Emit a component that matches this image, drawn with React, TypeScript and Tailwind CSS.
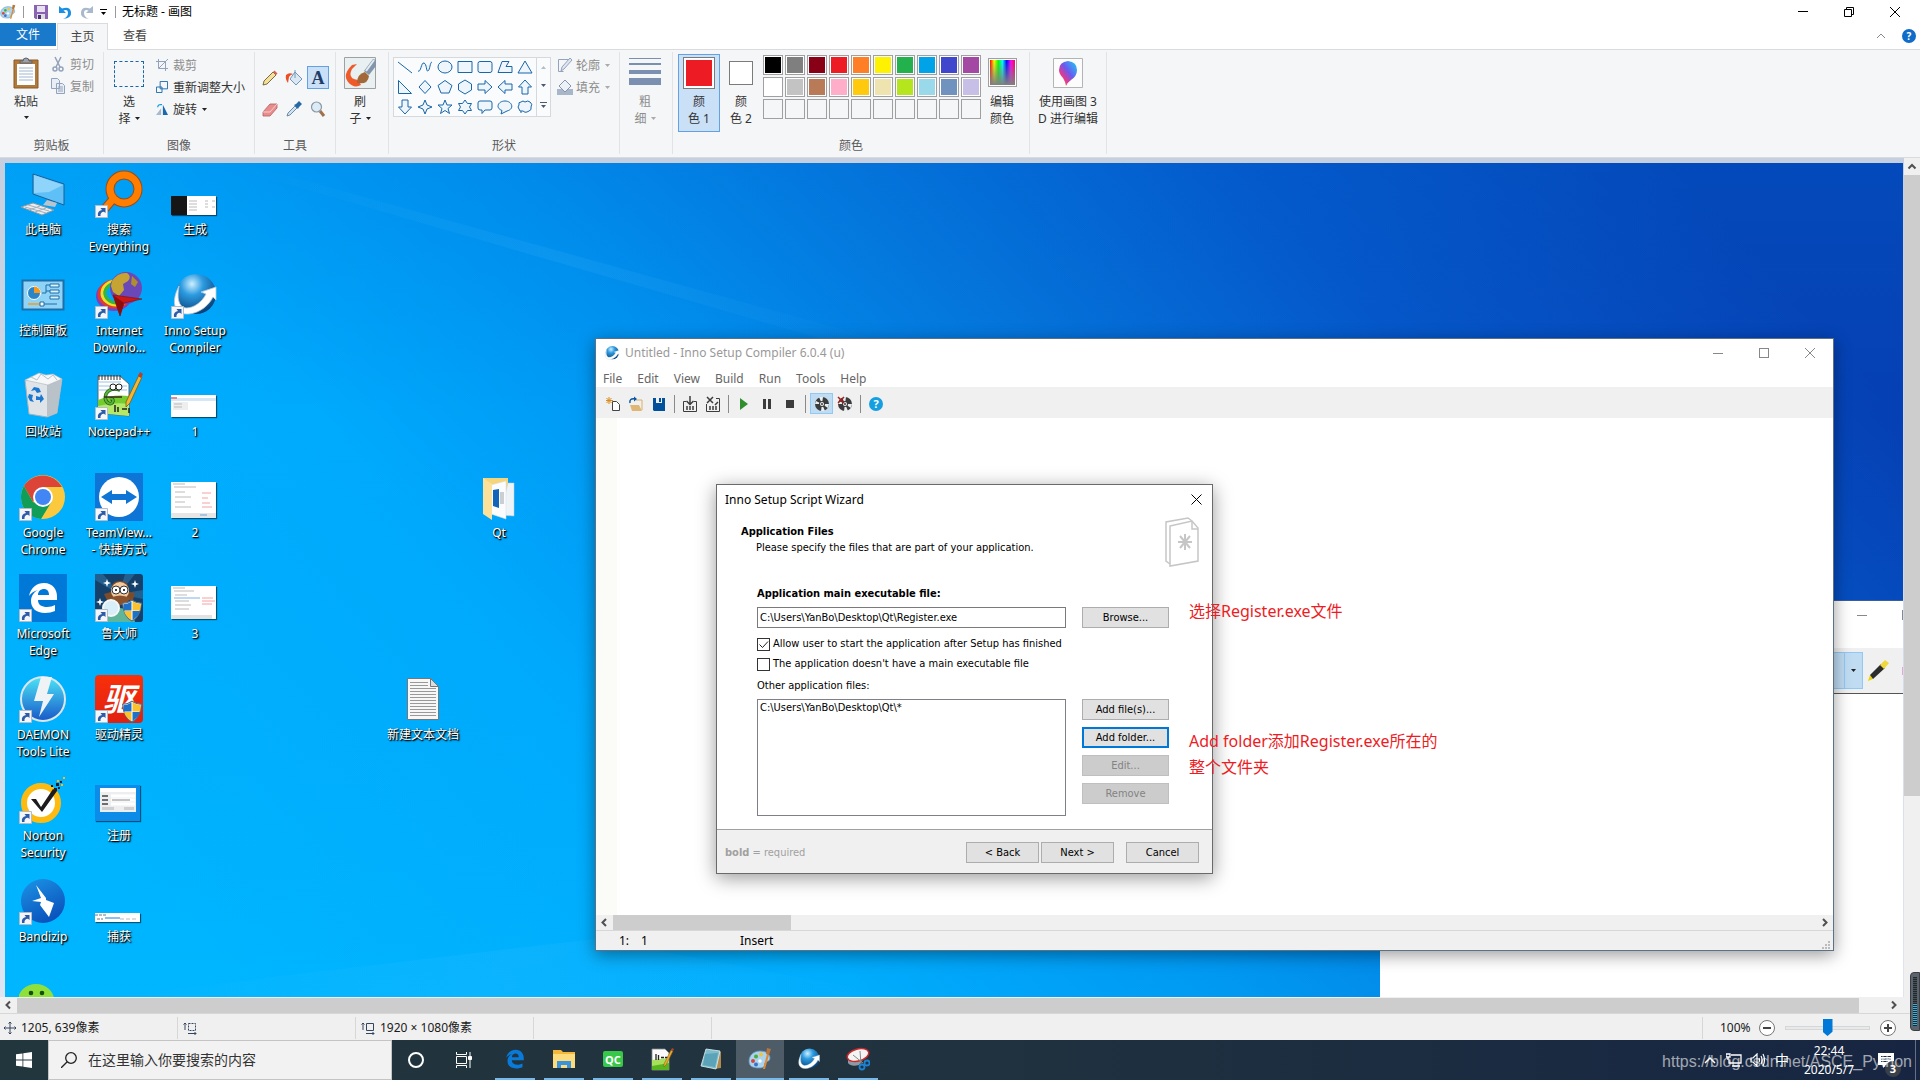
import type { ReactNode } from 'react'
import clsx from 'clsx'

const uiFont = 'font-["Noto_Sans","Noto_Sans_CJK_SC",sans-serif]'
const dialogFont = 'font-["DejaVu_Sans_Condensed","Noto_Sans_CJK_SC",sans-serif]'

const palette = [
  'bg-black', 'bg-[#7f7f7f]', 'bg-[#880015]', 'bg-[#ed1c24]', 'bg-[#ff7f27]',
  'bg-[#fff200]', 'bg-[#22b14c]', 'bg-[#00a2e8]', 'bg-[#3f48cc]', 'bg-[#a349a4]',
  'bg-white', 'bg-[#c3c3c3]', 'bg-[#b97a57]', 'bg-[#ffaec9]', 'bg-[#ffc90e]',
  'bg-[#efe4b0]', 'bg-[#b5e61d]', 'bg-[#99d9ea]', 'bg-[#7092be]', 'bg-[#c8bfe7]',
]

const shapes = [
  'M1 3L15 14',
  'M1 12C4 14 4 3 7 4S9 13 11 12 13 3 15 3',
  'M1 8a7 6 0 1 0 14 0a7 6 0 1 0-14 0',
  'M1 2.5h14v11H1z',
  'M3 2.5h10q2 0 2 2v7q0 2-2 2H3q-2 0-2-2v-7q0-2 2-2z',
  'M5 2.5h7l-3 5h6v6H1z',
  'M8 2l7 12H1z',
  'M1.5 1.5v13h13z',
  'M8 1.500l6 6.500-6 6.500-6-6.500z',
  'M8 1.500l7 5-3 7.500H4L1 6.500z',
  'M8 1l6.500 4v6L8 15l-6.500-4V5z',
  'M1 5h7V1.500L15 8l-7 6.500V11H1z',
  'M15 5H8V1.500L1 8l7 6.500V11h7z',
  'M5 15V8H1.500L8 1l6.500 7H11v7z',
  'M5 1v7H1.500L8 15l6.500-7H11V1z',
  'M8 1l2 5 5 2-5 2-2 5-2-5-5-2 5-2z',
  'M8 1l2 5h5l-4 3.500 1.500 5L8 11.500l-4.500 3 1.500-5L1 6h5z',
  'M8 1l2.500 3.500h4L12.500 8l2 3.500h-4L8 15l-2.500-3.500h-4L3.500 8l-2-3.500h4z',
  'M3 2h10q2 0 2 2v5q0 2-2 2H8l-3 3.500V11H3q-2 0-2-2V4q0-2 2-2z',
  'M5 11.500C-2 9 1 2 8 2s10 8 2 10L4 15z',
  'M4 3q2-2 4 0 3-2 5 0 3 2 1 5 1 3-2 4l-2 1q-2 1-4-1-4 1-4-2-2-2 0-4Q1 3 4 3zM4 12v2',
]

function Caret({ className = 'text-[#222]' }: { className?: string }) {
  return (
    <svg viewBox="0 0 7 4" className={clsx('inline-block w-[5px] h-[3px] shrink-0', className)} fill="currentColor" aria-hidden>
      <path d="M0 0h7L3.500 4z" />
    </svg>
  )
}

function PaintIcon({ className }: { className: string }) {
  return (
    <svg viewBox="0 0 24 24" className={className} aria-hidden>
      <path d="M1 14C1 8 6 4 12 4s10 3 10 7-4 3-5 5 1 5-6 5S1 19 1 14z" fill="#a9d3ee" stroke="#5f93bb" strokeWidth=".8" />
      <circle cx="5" cy="14" r="2" fill="#d9453a" />
      <circle cx="8" cy="9.500" r="2" fill="#46ad3e" />
      <circle cx="13" cy="7.500" r="2" fill="#f3c43a" />
      <circle cx="8" cy="17.500" r="2" fill="#3a72c9" />
      <circle cx="12" cy="14" r="1.800" fill="#fff" />
      <path d="M15 22l4-15 2 1-4 14z" fill="#e08a34" />
      <path d="M18 7l1-6 4 1-2 6z" fill="#b9753b" />
    </svg>
  )
}

function InnoIcon({ className }: { className: string }) {
  return (
    <svg viewBox="0 0 48 48" className={className} aria-hidden>
      <defs>
        <radialGradient id="innoBall" cx=".4" cy=".25" r=".8">
          <stop offset="0" stopColor="#cdefff" />
          <stop offset=".35" stopColor="#2c9be0" />
          <stop offset="1" stopColor="#04376f" />
        </radialGradient>
      </defs>
      <circle cx="25" cy="23" r="20" fill="url(#innoBall)" />
      <path d="M8 15C0 30 2 44 18 43 29 42 38 34 42 26l3 3V16l-15 5 5 2C31 31 23 37 15 37 7 36 6 26 8 15z" fill="#fff" stroke="#b8c8d8" strokeWidth=".8" />
    </svg>
  )
}

function EdgeIcon({ className }: { className: string }) {
  return (
    <svg viewBox="0 0 32 32" className={className} fill="currentColor" aria-hidden>
      <path d="M2 14C4 5 10 1 17 1c9 0 13 7 13 13v4H11c0 5 4 7 9 7 3 0 6-1 8-2v6c-3 1-6 2-10 2C9 31 4 26 4 19c0-5 3-9 7-11-4 1-7 3-9 6zm9-1h11c0-4-2-6-5-6s-6 2-6 6z" />
    </svg>
  )
}

function NotepadPlusIcon({ className }: { className: string }) {
  return (
    <svg viewBox="0 0 48 48" className={className} aria-hidden>
      <path d="M3 4h22l9 8v32L3 41z" fill="#fff" stroke="#5a6672" />
      <path d="M4 10h22M4 14h28M4 18h28" stroke="#9cc3e6" />
      <path d="M3 28q14-6 31-4v19L3 41z" fill="#74cc2f" />
      <path d="M3 34q16-4 31-2v12L3 41z" fill="#b4e869" />
      <path d="M4 3v5M7 3v5M10 3v5M13 3v5M16 3v5M19 3v5M22 3v5M25 3v5" stroke="#333" />
      <path d="M25 18q-10-3-14 4-2 6 2 9 4 2 5-2 0-3-3-2" fill="none" stroke="#1f5f1a" strokeWidth="3.500" />
      <path d="M25 18q-10-3-14 4-2 6 2 9 4 2 5-2 0-3-3-2" fill="none" stroke="#5cb338" strokeWidth="2" />
      <path d="M9 25h18" stroke="#3a2a1a" strokeWidth="1.500" />
      <circle cx="18" cy="15" r="3" fill="#fff" stroke="#222" />
      <circle cx="24" cy="15" r="3" fill="#fff" stroke="#222" />
      <path d="M20 33v7M23 35v5M27 37h5M34 36v5" stroke="#222" strokeWidth="1.500" />
      <path d="M31 30L44 3l3 2-12 26-4 4z" fill="#f2b632" stroke="#7a5a14" strokeWidth=".8" />
      <path d="M43 4l2-4 3 2-2 4z" fill="#b5402b" />
    </svg>
  )
}

function Shield() {
  return (
    <svg viewBox="0 0 20 22" className="absolute right-0 bottom-0 w-[22px] h-[23px]" aria-hidden>
      <path d="M10 1q4 3 9 3-1 13-9 17Q2 17 1 4q5 0 9-3z" fill="#fff" stroke="#5b6b7c" />
      <path d="M9.500 2.500V11H2.200Q1.800 8 1.800 5 6 5 9.500 2.500zM10.500 11.500h7.200Q16 17 10.500 20z" fill="#1d71c8" />
      <path d="M10.500 2.500V11h7.300q.5-3 .4-6-4-.2-7.700-2.500zM9.500 11.500H2.400Q4 17 9.500 20z" fill="#fcc22d" />
    </svg>
  )
}

function ShortcutArrow() {
  return (
    <svg viewBox="0 0 13 13" className="absolute left-0 bottom-0 w-[13px] h-[13px]" aria-hidden>
      <path d="M.5.5h12v12H.5z" fill="#f4f6f9" stroke="#b4bcc8" />
      <path d="M3 11Q2 6 7 5L5.500 3H10.500v5L9 6.800Q5 7 5.500 11z" fill="#2c5ba8" />
    </svg>
  )
}

function Thumb({ className, children }: { className: string; children?: ReactNode }) {
  return <span className={clsx('block w-[45px] bg-white shadow-[1px_1px_1px_#0008] overflow-hidden', className)}>{children}</span>
}

type Shortcut = {
  id: string
  label?: string
  col: string
  row: string
  icon: ReactNode
  arrow?: boolean
}

const desktopIcons: Shortcut[] = [
  {
    id: 'pc', label: '此电脑', col: 'col-start-1', row: 'row-start-1',
    icon: (
      <svg viewBox="0 0 48 48" className="w-12 h-12">
        <path d="M14 4l31 10v21L14 24z" fill="#5fc0f7" stroke="#1d5f94" />
        <path d="M15 5l29 10L30 22l-15 1z" fill="#8fd5fb" />
        <path d="M28 30l10 3-2 4-12-2z" fill="#b9c4cc" />
        <path d="M2 37l12-4 21 7-12 5z" fill="#e9edf0" stroke="#8b98a3" />
        <path d="M6 37l21 6M9 35l21 6M10 40l11-4M16 42l11-4" stroke="#a5b0b9" />
      </svg>
    ),
  },
  {
    id: 'control', label: '控制面板', col: 'col-start-1', row: 'row-start-2',
    icon: (
      <svg viewBox="0 0 48 48" className="w-12 h-12">
        <path d="M3.500 9.500h41v29h-41z" fill="#8fd3f7" stroke="#1c6fa8" strokeWidth="2" />
        <circle cx="15" cy="22" r="6.500" fill="#2a84c8" stroke="#fff" />
        <path d="M15 22v-6.500a6.500 6.500 0 0 1 6.500 6.500z" fill="#f79a1c" />
        <path d="M23 22h4v-8h4M27 20h4" stroke="#1c6fa8" fill="none" />
        <path d="M31 13h9v3h-9zM31 19h9v3h-9zM31 25h9v3h-9z" fill="#dff3fe" stroke="#1c6fa8" />
        <path d="M9 33h14" stroke="#f79a1c" strokeWidth="1.500" />
        <path d="M23 33h15" stroke="#1c6fa8" />
        <path d="M21 31h4v4h-4z" fill="#fff" stroke="#1c6fa8" />
      </svg>
    ),
  },
  {
    id: 'bin', label: '回收站', col: 'col-start-1', row: 'row-start-3',
    icon: (
      <svg viewBox="0 0 48 48" className="w-12 h-12">
        <path d="M6 8l37-1-5 34-10 4-18-3z" fill="#dfe4e8" stroke="#a8b1b9" />
        <path d="M28 13l15-6-5 34-10 4z" fill="#b9c2c9" />
        <path d="M6 8l8-4 6-3 7 2 7-1 9 5-14 6z" fill="#f5f7f8" stroke="#a9b3ba" strokeWidth=".6" />
        <path d="M12 5l6 3 4-6 7 5 5-4 4 5" fill="none" stroke="#b7c0c7" />
        <path d="M12 19l3-4 5 1 2 4-4 1-2-3zM22 22l3 5-4 4v-3h-4v-4l4 1zM10 22l4 1-1 4 2 3-4-1-2-4z" fill="#1c78cf" />
      </svg>
    ),
  },
  {
    id: 'chrome', label: 'Google Chrome', col: 'col-start-1', row: 'row-start-4', arrow: true,
    icon: (
      <svg viewBox="0 0 48 48" className="w-12 h-12">
        <circle cx="24" cy="24" r="22" fill="#fbc93d" />
        <path d="M5 13A22 22 0 0 1 43 14H24L14 29z" fill="#db4437" />
        <path d="M5 13A22 22 0 0 0 22 46L33 28 24 33 14 29z" fill="#0f9d58" />
        <circle cx="24" cy="24" r="10" fill="#fff" />
        <circle cx="24" cy="24" r="8" fill="#4285f4" />
      </svg>
    ),
  },
  {
    id: 'edge', label: 'Microsoft Edge', col: 'col-start-1', row: 'row-start-5', arrow: true,
    icon: (
      <span className="flex w-12 h-12 items-center justify-center bg-[#0078d7] text-white">
        <EdgeIcon className="w-8 h-8" />
      </span>
    ),
  },
  {
    id: 'daemon-tools', label: 'DAEMON Tools Lite', col: 'col-start-1', row: 'row-start-6', arrow: true,
    icon: (
      <svg viewBox="0 0 48 48" className="w-12 h-12">
        <defs>
          <linearGradient id="daemon" x2="0" y2="1">
            <stop offset="0" stopColor="#4ce4f7" />
            <stop offset="1" stopColor="#1858c8" />
          </linearGradient>
        </defs>
        <circle cx="24" cy="24" r="22" fill="url(#daemon)" stroke="#dce6ee" strokeWidth="2" />
        <path d="M22 2h11l-5 17h7L20 42l4-16h-9z" fill="#f0f3f5" />
      </svg>
    ),
  },
  {
    id: 'norton', label: 'Norton Security', col: 'col-start-1', row: 'row-start-7', arrow: true,
    icon: (
      <svg viewBox="0 0 48 48" className="w-12 h-12">
        <circle cx="22" cy="27" r="17" fill="#fff" stroke="#fdbb12" strokeWidth="6" />
        <path d="M12 23l5 0 5 8L34 13l4 2-15 21z" fill="#1c1c1c" />
        <path d="M35 12h3v3h-3zM37 7h3v3h-3zM41 5h2v2h-2zM39 11h2v2h-2zM32 9h2v2h-2z" fill="#1c1c1c" />
        <path d="M44 1h2v2h-2zM42 8h2v2h-2zM38 4h2v2h-2z" fill="#fdbb12" />
      </svg>
    ),
  },
  {
    id: 'bandizip-app', label: 'Bandizip', col: 'col-start-1', row: 'row-start-8', arrow: true,
    icon: (
      <svg viewBox="0 0 48 48" className="w-12 h-12">
        <defs>
          <linearGradient id="bandizip" x2=".5" y2="1">
            <stop offset="0" stopColor="#1c95e6" />
            <stop offset="1" stopColor="#0b54bd" />
          </linearGradient>
        </defs>
        <circle cx="24" cy="24" r="22" fill="url(#bandizip)" />
        <path d="M17 8l10 13 0 2 8 3-5 14L21 28l1-3-9-1 9-3z" fill="#fff" />
      </svg>
    ),
  },
  {
    id: 'wechat', col: 'col-start-1', row: 'row-start-9',
    icon: (
      <svg viewBox="0 0 48 48" className="w-12 h-12">
        <ellipse cx="17" cy="22" rx="18" ry="16" fill="#90e03c" />
        <ellipse cx="33" cy="32" rx="14" ry="13" fill="#f1f4f4" />
        <circle cx="12" cy="15" r="2.300" fill="#174d0c" />
        <circle cx="23" cy="15" r="2.300" fill="#174d0c" />
      </svg>
    ),
  },
  {
    id: 'everything', label: '搜索 Everything', col: 'col-start-2', row: 'row-start-1', arrow: true,
    icon: (
      <svg viewBox="0 0 48 48" className="w-12 h-12">
        <circle cx="29" cy="19" r="14" fill="none" stroke="#a04a10" strokeWidth="9" />
        <path d="M19 28L7 42" stroke="#a04a10" strokeWidth="9" />
        <circle cx="29" cy="19" r="14" fill="none" stroke="#ff7e00" strokeWidth="7" />
        <path d="M19 28L7 42" stroke="#ff7e00" strokeWidth="7" />
      </svg>
    ),
  },
  {
    id: 'idm', label: 'Internet Downlo...', col: 'col-start-2', row: 'row-start-2', arrow: true,
    icon: (
      <svg viewBox="0 0 48 48" className="w-12 h-12">
        <ellipse cx="19" cy="25" rx="16" ry="13" fill="none" stroke="#7d3fc0" strokeWidth="4" />
        <ellipse cx="20" cy="23" rx="16" ry="13" fill="none" stroke="#e23a2c" strokeWidth="3" />
        <ellipse cx="21" cy="22" rx="14" ry="12" fill="none" stroke="#f4dc22" strokeWidth="3" />
        <ellipse cx="22" cy="22" rx="12" ry="10" fill="none" stroke="#37b53a" strokeWidth="3" />
        <circle cx="31" cy="17" r="16" fill="#6b48b8" />
        <path d="M17 10Q23 1 32 2q5 3 1 8l-5 3 1 6-5 6-6-4-2-6z" fill="#c5a433" />
        <path d="M37 5l6 6-3 5-4-3z" fill="#b08e2c" />
        <path d="M18 24l29 4-18 4-4 13z" fill="#cc1717" stroke="#7d0b0b" strokeWidth=".6" />
        <path d="M18 24l11 8-4 13z" fill="#8d0d0d" />
      </svg>
    ),
  },
  { id: 'npp', label: 'Notepad++', col: 'col-start-2', row: 'row-start-3', arrow: true, icon: <NotepadPlusIcon className="w-12 h-12" /> },
  {
    id: 'teamviewer', label: 'TeamView...\n- 快捷方式', col: 'col-start-2', row: 'row-start-4', arrow: true,
    icon: (
      <svg viewBox="0 0 48 48" className="w-12 h-12">
        <path d="M0 0h48v48H0z" fill="#0e74d6" />
        <circle cx="24" cy="24" r="20" fill="#fff" />
        <path d="M6 24l11-7v4h14v-4l11 7-11 7v-4H17v4z" fill="#0e74d6" />
      </svg>
    ),
  },
  {
    id: 'ludashi', label: '鲁大师', col: 'col-start-2', row: 'row-start-5', arrow: true,
    icon: (
      <span className="relative block w-12 h-12">
        <svg viewBox="0 0 48 48" className="w-12 h-12">
          <rect width="48" height="48" rx="3" fill="#15406a" />
          <path d="M24 20L0 6V0h8zM24 20L30 0h10zM24 20l24-4v9z" fill="#24608f" />
          <path d="M10 48q2-14 14-14t16 14z" fill="#5fb59a" />
          <path d="M9 20l7-2q0-12 9-11 9-1 9 11l6 1-2 7H12z" fill="#7c4b2a" />
          <ellipse cx="25" cy="17" rx="9" ry="9" fill="#f3c9a0" />
          <path d="M15 24q10-5 20 0l-4 7H19z" fill="#8a522c" />
          <circle cx="21" cy="16" r="4" fill="#fff" stroke="#333" />
          <circle cx="29" cy="16" r="4" fill="#fff" stroke="#333" />
          <circle cx="21" cy="16" r="1" />
          <circle cx="29" cy="16" r="1" />
          <circle cx="16" cy="34" r="8" fill="#d8eef8" stroke="#f4f6f7" strokeWidth="2" />
          <path d="M12 5l1 3 3 1-3 1-1 3-1-3-3-1 3-1zM40 6l1 3 3 1-3 1-1 3-1-3-3-1 3-1zM5 24l1 3 3 1-3 1-1 3-1-3-3-1 3-1z" fill="#fff" />
        </svg>
        <Shield />
      </span>
    ),
  },
  {
    id: 'drivers', label: '驱动精灵', col: 'col-start-2', row: 'row-start-6', arrow: true,
    icon: (
      <span className="relative flex w-12 h-12 items-center justify-center rounded-sm bg-gradient-to-b from-[#f8300a] to-[#e02010] text-[32px] leading-none font-bold italic text-white">
        驱
        <Shield />
      </span>
    ),
  },
  {
    id: 'register', label: '注册', col: 'col-start-2', row: 'row-start-7',
    icon: (
      <span className="flex w-[45px] h-9 mb-[3px] mr-[3px] items-start justify-center bg-[#0c8be8] pt-[3px] shadow-[1px_1px_1px_#0008]">
        <svg viewBox="0 0 36 24" className="w-9 h-6">
          <path d="M0 0h36v24H0z" fill="#eceef0" />
          <path d="M0 0h36v4H0zM11 6.500h24v3H11zM11 10.500h24v3H11zM11 14.500h24v3H11z" fill="#fff" />
          <path d="M2 8h6M2 12h6M2 16h6" stroke="#444" strokeWidth="1.500" />
          <path d="M12 12h18" stroke="#888" />
          <path d="M2 19h12v3H2zM24 19h10v3H24z" fill="#cfcfcf" />
        </svg>
      </span>
    ),
  },
  {
    id: 'capture', label: '捕获', col: 'col-start-2', row: 'row-start-8',
    icon: (
      <Thumb className="h-[9px] mb-[3px] mr-[3px]">
        <svg viewBox="0 0 45 9" className="block w-[45px] h-[9px]">
          <path d="M0 2h12M2 6h6" stroke="#777" strokeDasharray="3 1" />
          <path d="M10 5h15" stroke="#8cc0ee" strokeWidth="2" />
          <path d="M25 6h18" stroke="#bbb" strokeDasharray="4 2" />
        </svg>
      </Thumb>
    ),
  },
  {
    id: 'build', label: '生成', col: 'col-start-3', row: 'row-start-1',
    icon: (
      <Thumb className="h-[19px] mb-[3px] mr-[3px]">
        <svg viewBox="0 0 45 19" className="block w-[45px] h-[19px]">
          <path d="M0 0h16v19H0z" fill="#161616" />
          <path d="M18 5h8M18 8h8M18 11h8M18 14h8M34 5h3M34 8h3M34 11h3M41 5h3M41 11h3" stroke="#bbb" />
        </svg>
      </Thumb>
    ),
  },
  { id: 'inno', label: 'Inno Setup Compiler', col: 'col-start-3', row: 'row-start-2', arrow: true, icon: <InnoIcon className="w-12 h-12" /> },
  {
    id: 'shot-1', label: '1', col: 'col-start-3', row: 'row-start-3',
    icon: (
      <Thumb className="h-[22px] mb-[3px] mr-[3px]">
        <svg viewBox="0 0 45 22" className="block w-[45px] h-[22px]">
          <path d="M0 3h45v3H0z" fill="#d5e6f6" />
          <path d="M0 2h6v2H0z" fill="#e88a96" />
          <path d="M2 7h15v8H2z" fill="#eee" />
          <path d="M3 9h8M3 12h8" stroke="#bbb" />
        </svg>
      </Thumb>
    ),
  },
  {
    id: 'shot-2', label: '2', col: 'col-start-3', row: 'row-start-4',
    icon: (
      <Thumb className="h-9 mb-[3px] mr-[3px]">
        <svg viewBox="0 0 45 36" className="block w-[45px] h-9">
          <path d="M2 2h12M3 5h22M4 10h10M4 15h16M4 20h10M4 25h16" stroke="#bbb" />
          <path d="M31 11h9M31 16h6M31 21h8M31 25h10" stroke="#f5a0a0" />
          <path d="M0 31h45v5H0z" fill="#e6e6e6" />
          <path d="M29 33h7" stroke="#6aa5da" />
        </svg>
      </Thumb>
    ),
  },
  {
    id: 'shot-3', label: '3', col: 'col-start-3', row: 'row-start-5',
    icon: (
      <Thumb className="h-[33px] mb-[3px] mr-[3px]">
        <svg viewBox="0 0 45 33" className="block w-[45px] h-[33px]">
          <path d="M2 2h12M3 5h20M4 9h12M4 15h14M4 19h16M4 23h14" stroke="#bbb" />
          <path d="M3 12h26" stroke="#7ab4e4" />
          <path d="M31 12h11M31 15h13M31 18h10" stroke="#f5a0a0" />
          <path d="M0 29h41v4H0z" fill="#e2e2e2" />
        </svg>
      </Thumb>
    ),
  },
  {
    id: 'qt-folder', label: 'Qt', col: 'col-start-7', row: 'row-start-4',
    icon: (
      <svg viewBox="0 0 48 48" className="w-12 h-12">
        <path d="M8 5h25v30l-17 6-8-5z" fill="#f5d57c" />
        <path d="M33 10h6v33l-14-1z" fill="#eef3f7" stroke="#b9cfdf" strokeWidth=".5" />
        <path d="M16 12l15-4v38l-15-5z" fill="#fbfcfd" stroke="#d6dde2" strokeWidth=".5" />
        <path d="M18 17l6-1v19l-6-2z" fill="#1164b8" />
        <path d="M25 19h4v12h-4z" fill="#cbcfd3" />
        <path d="M8 5l9 6v36l-9-6z" fill="#fbe19a" />
      </svg>
    ),
  },
  {
    id: 'text-file', label: '新建文本文档', col: 'col-start-6', row: 'row-start-6',
    icon: (
      <svg viewBox="0 0 48 48" className="w-12 h-12">
        <path d="M8.500 3.500h23l8 8v33h-31z" fill="#f7f7f7" stroke="#777" />
        <path d="M31.500 3.500v8h8z" fill="#ddd" stroke="#777" />
        <path d="M11 7.500h18M11 10.500h18M11 13.500h26M11 16.500h26M11 19.500h26M11 22.500h26M11 25.500h26M11 28.500h26M11 31.500h26M11 34.500h26M11 37.500h26M11 40.500h26" stroke="#999" />
      </svg>
    ),
  },
]

function TitleBar() {
  return (
    <header className="flex h-[23px] shrink-0 items-center bg-white text-xs text-black">
      <PaintIcon className="w-4 h-4" />
      <span className="ml-[7px] w-px h-3 bg-[#999]" />
      <button type="button" aria-label="保存" className="ml-2.5">
        <svg viewBox="0 0 14 14" className="w-3.5 h-3.5">
          <path d="M0 0h14v14H1.500L0 12.500z" fill="#8a63b3" />
          <path d="M3 1h8v6H3z" fill="#e8e0f2" />
          <path d="M3 9h8v5H3z" fill="#ddd" />
          <path d="M4 10h3v4H4z" fill="#4f2f7a" />
        </svg>
      </button>
      <button type="button" aria-label="撤消" className="ml-2.5">
        <svg viewBox="0 0 14 14" className="w-3.5 h-3.5">
          <path d="M1 1v7h7L5.500 5.500Q10 4 10 8T5 14q9-1 8-7T4 3.500z" fill="#1b8fe0" />
        </svg>
      </button>
      <button type="button" aria-label="重做" className="ml-2">
        <svg viewBox="0 0 14 14" className="w-3.5 h-3.5">
          <path d="M13 1v7H6l2.500-2.500Q4 4 4 8t5 6Q0 13 1 7t9-3.500z" fill="#a9b8cc" />
        </svg>
      </button>
      <button type="button" aria-label="自定义快速访问工具栏" className="ml-1.5 flex flex-col items-center gap-0.5">
        <span className="w-[7px] h-px bg-black" />
        <Caret className="text-black" />
      </button>
      <span className="ml-2 w-px h-3 bg-[#999]" />
      <h1 className="ml-1.5">无标题 - 画图</h1>
      <div className="ml-auto flex h-full">
        <button type="button" aria-label="最小化" className="flex w-[46px] items-center justify-center">
          <span className="w-2.5 h-px bg-black" />
        </button>
        <button type="button" aria-label="向下还原" className="flex w-[46px] items-center justify-center">
          <svg viewBox="0 0 10 10" className="w-2.5 h-2.5" fill="none" stroke="#000">
            <path d="M.5 2.500h7v7h-7zM2.500 2.500v-2h7v7h-2" />
          </svg>
        </button>
        <button type="button" aria-label="关闭" className="mr-0.5 flex w-[46px] items-center justify-center">
          <svg viewBox="0 0 10 10" className="w-2.5 h-2.5" stroke="#000">
            <path d="M0 0l10 10M10 0L0 10" />
          </svg>
        </button>
      </div>
    </header>
  )
}

function TabRow() {
  return (
    <nav className="flex h-[27px] shrink-0 border-b border-[#dadbdc] bg-white text-xs text-[#444]">
      <button type="button" className="w-14 h-[23px] bg-[#1979ca] text-white">文件</button>
      <button type="button" className="ml-px w-[51px] h-[27px] border border-b-0 border-[#dadbdc] bg-[#f5f6f7]">主页</button>
      <button type="button" className="w-[54px] h-[26px]">查看</button>
      <div className="ml-auto flex items-center gap-4 pr-1">
        <svg viewBox="0 0 10 6" className="w-2.5 h-1.5" fill="none" stroke="#888">
          <path d="M1 5l4-4 4 4" />
        </svg>
        <button type="button" aria-label="帮助" className="w-3.5 h-3.5 rounded-full bg-[#0f6cc8] text-[10px] leading-none font-bold text-white">?</button>
      </div>
    </nav>
  )
}

function Group({ label, className, children }: { label?: string; className: string; children: ReactNode }) {
  return (
    <section className={clsx('flex flex-col justify-between border-r border-[#e2e3e4] h-[102px] shrink-0', className)}>
      <div className="flex">{children}</div>
      {label && <p className="text-center text-[#5a5a5a] leading-4">{label}</p>}
    </section>
  )
}

function SmallCommand({ icon, label, muted, caret }: { icon: ReactNode; label: string; muted?: boolean; caret?: boolean }) {
  return (
    <button type="button" className={clsx('flex h-[22px] items-center gap-[5px] whitespace-nowrap', muted ? 'text-[#8d8d8d]' : 'text-[#333]')}>
      {icon}
      {label}
      {caret && <Caret className={muted ? 'text-[#aaa]' : 'text-[#222]'} />}
    </button>
  )
}

function Ribbon() {
  return (
    <div className="flex h-[108px] shrink-0 border-b border-[#dadbdc] bg-[#f5f6f7] pt-0.5 text-xs leading-[17px] text-[#333]">
      <Group label="剪贴板" className="w-[104px]">
        <button type="button" className="mt-[5px] ml-[9px] flex w-[34px] flex-col items-center">
          <svg viewBox="0 0 26 32" className="w-[26px] h-8">
            <path d="M1 3h24v28H1z" fill="#b07a3c" stroke="#8a5a24" />
            <path d="M4 7h18v21H4z" fill="#fff" />
            <path d="M6 11h14M6 14h14M6 17h14M6 20h14M6 23h14" stroke="#9fb7cf" />
            <path d="M7 6V4h3q0-3 3-3t3 3h3v2z" fill="#9aa3ab" stroke="#5d656c" />
          </svg>
          <span className="mt-1">粘贴</span>
          <Caret className="mt-1.5 text-[#222]" />
        </button>
        <div className="mt-px ml-2 flex flex-col">
          <SmallCommand
            muted
            label="剪切"
            icon={
              <svg viewBox="0 0 14 16" className="w-3.5 h-4" fill="none" stroke="#93a3bb" strokeWidth="1.500">
                <path d="M4 1l5 10M10 1L5 11" />
                <circle cx="4" cy="13" r="2" />
                <circle cx="10" cy="13" r="2" />
              </svg>
            }
          />
          <SmallCommand
            muted
            label="复制"
            icon={
              <svg viewBox="0 0 14 16" className="w-3.5 h-4" fill="#e9eef6" stroke="#93a3bb">
                <path d="M.5.500h6l2 2v8h-8zM5.500 5.500h6l2 2v8h-8z" />
                <path d="M7 9h5M7 11h5M7 13h5" />
              </svg>
            }
          />
        </div>
      </Group>

      <Group label="图像" className="w-[151px]">
        <button type="button" className="mt-[9px] ml-2.5 flex w-[30px] flex-col items-center">
          <span className="h-[26px] w-[30px] border border-dashed border-[#1866ab]" />
          <span className="mt-1.5">选</span>
          <span className="flex items-center gap-1">择<Caret /></span>
        </button>
        <div className="mt-0.5 ml-3 flex flex-col">
          <SmallCommand
            muted
            label="裁剪"
            icon={
              <svg viewBox="0 0 12 12" className="w-3 h-3" fill="none" stroke="#93a3bb">
                <path d="M2.500 0v9.500H12M0 2.500h9.500V12M3 9l9-9" />
              </svg>
            }
          />
          <SmallCommand
            label="重新调整大小"
            icon={
              <svg viewBox="0 0 13 13" className="w-3 h-3" fill="#f5f6f7" stroke="#1a68ad">
                <path d="M4.500.500h8v8h-8zM.500 6.500h6v6h-6z" />
              </svg>
            }
          />
          <SmallCommand
            caret
            label="旋转"
            icon={
              <svg viewBox="0 0 14 14" className="w-3 h-3.5">
                <path d="M8 2l6 12H8z" fill="#1a68ad" />
                <path d="M6 6v8H0z" fill="#a9b9cc" />
                <path d="M2 5q0-4 5-3" fill="none" stroke="#1a9be0" strokeWidth="1.500" />
              </svg>
            }
          />
        </div>
      </Group>

      <Group label="工具" className="w-[81px]">
        <div className="ml-1 mt-3.5 grid grid-cols-3 grid-rows-[22px_22px] gap-x-0.5 gap-y-2.5">
          <button type="button" aria-label="铅笔" className="flex h-[23px] w-[22px] items-center justify-center">
            <svg viewBox="0 0 16 16" className="w-4 h-4">
              <path d="M1 15l1-4L11 2l3 3L5 14z" fill="#f4e09a" stroke="#5c4a1e" strokeWidth=".8" />
              <path d="M11 2l1.500-1.500 3 3L14 5z" fill="#d9605a" />
            </svg>
          </button>
          <button type="button" aria-label="用颜色填充" className="flex h-[23px] w-[22px] items-center justify-center">
            <svg viewBox="0 0 18 16" className="w-[18px] h-4">
              <path d="M10 2l7 7-6 6-6-6z" fill="#dbe8f3" stroke="#6e98ba" />
              <path d="M10 0v8" stroke="#6e98ba" />
              <path d="M1 5q3-3 7-1-3 1-4 3l-1 6q-3-4-2-8z" fill="#ee4d24" />
            </svg>
          </button>
          <button type="button" aria-label="文本" className="flex h-[23px] w-[22px] items-center justify-center border border-[#62a2e4] bg-[#c9e0f7] font-['Liberation_Serif',serif] text-lg leading-none font-bold text-[#1f3d66]">A</button>
          <button type="button" aria-label="橡皮擦" className="flex h-[22px] w-[22px] items-center justify-center">
            <svg viewBox="0 0 16 16" className="w-4 h-4">
              <path d="M1 11l7-8h7v4l-7 8H1z" fill="#e88d8d" stroke="#b35d5d" strokeWidth=".8" />
              <path d="M1 11h7l7-8" fill="none" stroke="#f8cccc" />
            </svg>
          </button>
          <button type="button" aria-label="颜色选取器" className="flex h-[22px] w-[22px] items-center justify-center">
            <svg viewBox="0 0 16 16" className="w-4 h-4">
              <path d="M1 15l1-3 7-7 2 2-7 7z" fill="#cfe3f4" stroke="#54738e" strokeWidth=".8" />
              <path d="M8 4l2-1 3-3 3 3-3 3-1 2z" fill="#2468a8" />
            </svg>
          </button>
          <button type="button" aria-label="放大镜" className="flex h-[22px] w-[22px] items-center justify-center">
            <svg viewBox="0 0 16 16" className="w-4 h-4">
              <path d="M10 10l4 5" stroke="#a0704a" strokeWidth="3" />
              <circle cx="6.500" cy="6" r="5" fill="#dcecf7" stroke="#8b98a4" strokeWidth="1.200" />
            </svg>
          </button>
        </div>
      </Group>

      <Group className="w-[53px]">
        <button type="button" className="mt-[5px] ml-2 flex w-8 flex-col items-center">
          <svg viewBox="0 0 32 32" className="w-8 h-8">
            <path d="M.500.500h31v31H.500z" fill="#e9f0f2" stroke="#a0a0a0" />
            <path d="M8 8Q-2 18 4 25t13 3l-3-5Q3 22 8 12l5-5z" fill="#ef5a2a" />
            <path d="M13 26q0-9 8-11l4 4q-1 9-12 7z" fill="#a3683a" />
            <path d="M20 14l9-12 3 1v6l-7 9z" fill="#8295ab" />
            <path d="M22 14l8-11" stroke="#e4ebf2" strokeWidth="2" />
          </svg>
          <span className="mt-1">刷</span>
          <span className="flex items-center gap-1">子<Caret /></span>
        </button>
      </Group>

      <Group label="形状" className="w-[231px]">
        <div className="mt-[5px] ml-1 flex h-[60px] border border-[#d5d8dc] bg-[#fafbfc]">
          <div className="grid w-[142px] grid-cols-[repeat(7,20px)] content-center justify-center gap-y-1">
            {shapes.map((d) => (
              <button type="button" key={d} className="flex h-4 items-center justify-center" aria-label="形状">
                <svg viewBox="0 0 16 16" className="w-4 h-4" fill="#eef6fb" stroke="#1866ab" strokeLinejoin="round">
                  <path d={d} />
                </svg>
              </button>
            ))}
          </div>
          <div className="flex w-3.5 flex-col items-center justify-around border-l border-[#d5d8dc]">
            <Caret className="rotate-180 text-[#b4bcc6]" />
            <Caret className="text-[#4a5a70]" />
            <span className="flex flex-col items-center gap-0.5">
              <span className="h-px w-[7px] bg-[#4a5a70]" />
              <Caret className="text-[#4a5a70]" />
            </span>
          </div>
        </div>
        <div className="mt-0.5 ml-1.5 flex flex-col">
          <SmallCommand
            muted
            caret
            label="轮廓"
            icon={
              <svg viewBox="0 0 16 16" className="w-4 h-4 -mr-0.5">
                <path d="M12 2.500H1.500v12h5" fill="none" stroke="#93a3bb" />
                <path d="M4 14l1-4 8-9 2 2-8 9z" fill="#dde6f1" stroke="#93a3bb" />
              </svg>
            }
          />
          <SmallCommand
            muted
            caret
            label="填充"
            icon={
              <svg viewBox="0 0 16 16" className="w-4 h-4 -mr-0.5">
                <path d="M0 10h16v6H0z" fill="#a9b6ca" />
                <path d="M8 1l6 6-6 6-6-6z" fill="#eef2f7" stroke="#8495ae" />
              </svg>
            }
          />
        </div>
      </Group>

      <Group className="w-[53px]">
        <button type="button" className="mt-1.5 ml-[9px] flex w-8 flex-col items-center text-[#8d8d8d]">
          <svg viewBox="0 0 32 31" className="w-8 h-[31px]" fill="#7b8fb0">
            <path d="M0 0h32v1H0zM0 5h32v2H0zM0 12h32v4H0zM0 20h32v7H0z" />
          </svg>
          <span className="mt-1">粗</span>
          <span className="flex items-center gap-1">细<Caret className="text-[#aaa]" /></span>
        </button>
      </Group>

      <Group label="颜色" className="w-[357px]">
        <button type="button" className="mt-0.5 ml-[5px] flex h-[78px] w-[42px] flex-col items-center border border-[#62a2e4] bg-[#c9e0f7] pt-0.5">
          <span className="flex h-8 w-8 border border-[#7b7b7b] bg-white p-0.5">
            <span className="flex-1 bg-[#ed1c24]" />
          </span>
          <span className="mt-1">颜</span>
          <span>色 1</span>
        </button>
        <button type="button" className="mt-[9px] ml-[9px] flex w-6 flex-col items-center whitespace-nowrap">
          <span className="h-6 w-6 border border-[#7b7b7b] bg-white" />
          <span className="mt-2">颜</span>
          <span>色 2</span>
        </button>
        <div className="mt-[3px] ml-2.5 grid h-[64px] grid-cols-[repeat(10,20px)] grid-rows-[repeat(3,20px)] gap-0.5">
          {palette.map((color) => (
            <button type="button" key={color} aria-label="颜色" className="flex border border-[#a0a0a0] bg-white p-px">
              <span className={clsx('flex-1', color)} />
            </button>
          ))}
          {Array.from({ length: 10 }, (_, i) => (
            <button type="button" key={i} aria-label="空白颜色" className="border border-[#a0a0a0]" />
          ))}
        </div>
        <button type="button" className="mt-1.5 ml-[5px] flex w-8 flex-col items-center">
          <span className="h-[29px] w-[29px] border border-[#a0a0a0] bg-white p-px">
            <span className="block h-full bg-[linear-gradient(to_top,#808080,transparent),linear-gradient(to_right,#f00,#ff0,#0f0,#0ff,#00f,#f0f,#f04)]" />
          </span>
          <span className="mt-1.5">编辑</span>
          <span>颜色</span>
        </button>
      </Group>

      <Group className="w-[77px]">
        <button type="button" className="mt-1.5 flex w-full flex-col items-center whitespace-nowrap">
          <svg viewBox="0 0 30 30" className="w-[30px] h-[30px]">
            <defs>
              <linearGradient id="paint3d" x1="1" x2="0" y2="1">
                <stop offset="0" stopColor="#19d3f5" />
                <stop offset=".45" stopColor="#6a5af0" />
                <stop offset=".7" stopColor="#e33a8c" />
                <stop offset="1" stopColor="#ffb52e" />
              </linearGradient>
            </defs>
            <path d="M.500.500h29v29H.500z" fill="#fcfcfc" stroke="#b4b4b4" />
            <path d="M15 3q9 1 9 9 0 6-6 10-3 2-5 6-1-5-3-8-4-4-4-8 0-8 9-9z" fill="url(#paint3d)" />
          </svg>
          <span className="mt-[5px]">使用画图 3</span>
          <span>D 进行编辑</span>
        </button>
      </Group>
    </div>
  )
}

function Wallpaper() {
  return (
    <svg viewBox="0 0 1898 834" preserveAspectRatio="none" className="absolute inset-0 h-full w-full" aria-hidden>
      <defs>
        <linearGradient id="sky" x1="0" y1=".7" x2="1" y2=".3">
          <stop offset="0" stopColor="#00b4ff" />
          <stop offset=".28" stopColor="#00aafd" />
          <stop offset=".46" stopColor="#0093f0" />
          <stop offset=".62" stopColor="#0476dc" />
          <stop offset=".8" stopColor="#0555c8" />
          <stop offset="1" stopColor="#0540b4" />
        </linearGradient>
        <linearGradient id="haze" x2="0" y2="1">
          <stop offset="0" stopColor="#0070d8" stopOpacity=".2" />
          <stop offset=".3" stopColor="#0070d8" stopOpacity="0" />
          <stop offset="1" stopColor="#00c8ff" stopOpacity=".1" />
        </linearGradient>
        <linearGradient id="beam">
          <stop offset="0" stopColor="#5cc4ff" stopOpacity="0" />
          <stop offset=".5" stopColor="#5cc4ff" stopOpacity=".12" />
          <stop offset="1" stopColor="#5cc4ff" stopOpacity="0" />
        </linearGradient>
      </defs>
      <path d="M0 0h1898v834H0z" fill="url(#sky)" />
      <path d="M0 0h1898v834H0z" fill="url(#haze)" />
      <path d="M210 0L900 200V184L236 0z" fill="url(#beam)" />
      <path d="M100 834L590 776 900 834z" fill="url(#beam)" />
    </svg>
  )
}

function DesktopShortcut({ item }: { item: Shortcut }) {
  return (
    <a href="#" className={clsx('flex flex-col items-center text-center text-white', item.col, item.row)}>
      <span className="relative flex h-12 w-12 items-end justify-center">
        {item.icon}
        {item.arrow && <ShortcutArrow />}
      </span>
      {item.label && (
        <span className="mt-[3px] max-w-[74px] whitespace-pre-line text-xs leading-[17px] [text-shadow:1px_1px_2px_#000,1px_1px_1px_#000]">{item.label}</span>
      )}
    </a>
  )
}

function SnippingWindow() {
  return (
    <div className="absolute left-[1375px] right-0 top-[437px] bottom-0 flex flex-col border-t border-[#3a5f94] bg-white">
      <div className="flex h-[47px] items-start justify-end gap-[35px] pt-[9px]">
        <span className="mt-[5px] h-px w-2.5 bg-[#888]" />
        <span className="h-2.5 w-px bg-[#888]" />
      </div>
      <div className="flex h-[46px] items-center justify-end border-b border-[#555] bg-[#f0f0f0]">
        <button type="button" aria-label="笔" className="h-[37px] w-14 border border-[#90c8f6] bg-[#c0dcf3]" />
        <button type="button" aria-label="笔选项" className="flex h-[37px] w-[18px] items-center justify-center border border-l-0 border-[#90c8f6] bg-[#c0dcf3]">
          <Caret />
        </button>
        <svg viewBox="0 0 22 22" className="ml-1 mr-[13px] w-[22px] h-[22px]" aria-hidden>
          <path d="M1 21l2-6 3 4z" fill="#e8d400" />
          <path d="M3 15L14 4l4 4L6 19z" fill="#2c2c2c" />
          <path d="M13 5l5-5 4 3-5 6z" fill="#efd83c" />
        </svg>
        <span className="h-2 w-px bg-[#e9a6cf]" />
      </div>
    </div>
  )
}

function DialogButton({ children, className, disabled, primary }: { children: ReactNode; className?: string; disabled?: boolean; primary?: boolean }) {
  return (
    <button
      type="button"
      disabled={disabled}
      className={clsx(
        'h-[21px]',
        primary ? 'border-2 border-[#0078d7] leading-[17px]' : disabled ? 'border border-[#bfbfbf]' : 'border border-[#adadad]',
        disabled ? 'bg-[#ccc] text-[#838383]' : 'bg-[#e1e1e1] text-black',
        className,
      )}
    >
      {children}
    </button>
  )
}

function CheckRow({ id, label, checked }: { id: string; label: string; checked?: boolean }) {
  return (
    <div className="flex h-5 items-center gap-[3px]">
      <span className="relative flex">
        <input id={id} type="checkbox" defaultChecked={checked} className="peer h-[13px] w-[13px] appearance-none border border-[#333] bg-white" />
        <svg viewBox="0 0 13 13" className="pointer-events-none absolute inset-0 hidden h-[13px] w-[13px] peer-checked:block" fill="none" stroke="#222" aria-hidden>
          <path d="M2.500 6.500l3 3 5.500-6" />
        </svg>
      </span>
      <label htmlFor={id} className="whitespace-nowrap">{label}</label>
    </div>
  )
}

function WizardDialog() {
  return (
    <div
      role="dialog"
      aria-label="Inno Setup Script Wizard"
      className={clsx('absolute left-[120px] top-[145px] flex w-[497px] flex-col border border-[#6a6a6a] bg-white text-[11px] leading-4 text-black shadow-[0_4px_18px_#0006]', dialogFont)}
    >
      <div className={clsx('flex h-[29px] items-center justify-between pl-2 pr-2.5 text-xs', uiFont)}>
        <h3>Inno Setup Script Wizard</h3>
        <button type="button" aria-label="Close">
          <svg viewBox="0 0 11 11" className="w-[11px] h-[11px]" stroke="#000">
            <path d="M.500.500l10 10M10.500.500l-10 10" />
          </svg>
        </button>
      </div>
      <div className="flex h-[72px] justify-between pl-6 pr-[13px]">
        <div className="pt-2.5">
          <h4 className="font-bold">Application Files</h4>
          <p className="pl-[15px]">Please specify the files that are part of your application.</p>
        </div>
        <svg viewBox="0 0 34 50" className="mt-[3px] w-[34px] h-[50px]" fill="none" stroke="#c6c6c6" strokeWidth="1.500" aria-hidden>
          <path d="M5 47L1 44V5l22-4 4 3" />
          <path d="M5 9l22-5 6 7v33L5 49z" fill="#fff" />
          <path d="M27 4v8h6" />
          <path d="M20 17v16M13 25h14M15 19l10 12M25 19L15 31" strokeWidth="2" />
        </svg>
      </div>
      <div className="flex flex-col pl-10 pr-[43px] pb-[13px]">
        <label htmlFor="main-exe" className="font-bold">Application main executable file:</label>
        <div className="mt-[5px] flex gap-4">
          <input id="main-exe" type="text" defaultValue="C:\Users\YanBo\Desktop\Qt\Register.exe" className="h-[21px] min-w-0 flex-1 border border-[#7a7a7a] px-0.5" />
          <DialogButton className="w-[87px]">Browse...</DialogButton>
        </div>
        <div className="mt-1.5">
          <CheckRow id="allow-start" checked label="Allow user to start the application after Setup has finished" />
          <CheckRow id="no-exe" label="The application doesn't have a main executable file" />
        </div>
        <label htmlFor="other-files" className="mt-1">Other application files:</label>
        <div className="mt-[5px] flex gap-4">
          <select id="other-files" size={7} className="h-[117px] min-w-0 flex-1 appearance-none border border-[#7f8087] bg-white bg-none py-px px-0 text-[11px] leading-4 outline-none">
            <option className="px-0.5 py-0">C:\Users\YanBo\Desktop\Qt\*</option>
          </select>
          <div className="flex w-[87px] flex-col gap-[7px]">
            <DialogButton>Add file(s)...</DialogButton>
            <DialogButton primary>Add folder...</DialogButton>
            <DialogButton disabled>Edit...</DialogButton>
            <DialogButton disabled>Remove</DialogButton>
          </div>
        </div>
      </div>
      <div className="flex h-11 items-center border-t border-[#a0a0a0] bg-[#f0f0f0] pl-2 pr-[13px] pt-0.5">
        <p className="mr-auto text-[#a0a0a0]">
          <b>bold</b> = required
        </p>
        <DialogButton className="w-[73px]">&lt; Back</DialogButton>
        <DialogButton className="ml-0.5 w-[73px]">Next &gt;</DialogButton>
        <DialogButton className="ml-3 w-[73px]">Cancel</DialogButton>
      </div>
    </div>
  )
}

function ToolIcon({ label, className, children }: { label: string; className?: string; children: ReactNode }) {
  return (
    <button type="button" aria-label={label} className={clsx('flex items-center justify-center', className ?? 'h-4 w-4')}>
      <svg viewBox="0 0 16 16" className="w-4 h-4 shrink-0">{children}</svg>
    </button>
  )
}

const Divider = () => <span className="h-[18px] w-px bg-[#8a8a8a]" />

function Disc() {
  return (
    <>
      <circle cx="8" cy="8" r="7" fill="#3c3c3c" />
      <path d="M8 8L1 8l1-3zM8 8l7 0-1 4zM8 8L5 1h4zM8 8l3 7H7z" fill="#e8eef2" />
      <circle cx="8" cy="8" r="3" fill="#3c3c3c" />
      <circle cx="8" cy="8" r="2" fill="#f0f0f0" />
      <circle cx="8" cy="8" r="1" fill="#3c3c3c" />
    </>
  )
}

function InnoWindow() {
  return (
    <div className="absolute left-[590px] top-[175px] flex h-[613px] w-[1239px] flex-col border border-[#5c7086] bg-white text-xs text-[#666] shadow-[0_4px_16px_#0006]">
      <div className="flex h-7 shrink-0 items-center pl-2">
        <InnoIcon className="w-4 h-4" />
        <h2 className="ml-[5px] text-[#999]">Untitled - Inno Setup Compiler 6.0.4 (u)</h2>
        <div className="ml-auto flex h-full">
          <button type="button" aria-label="Minimize" className="flex w-[46px] items-center justify-center">
            <span className="w-2.5 h-px bg-[#888]" />
          </button>
          <button type="button" aria-label="Maximize" className="flex w-[46px] items-center justify-center">
            <span className="w-2.5 h-2.5 border border-[#888]" />
          </button>
          <button type="button" aria-label="Close" className="flex w-[46px] items-center justify-center">
            <svg viewBox="0 0 10 10" className="w-2.5 h-2.5" stroke="#888">
              <path d="M0 0l10 10M10 0L0 10" />
            </svg>
          </button>
        </div>
      </div>
      <nav className="flex h-5 shrink-0 items-end gap-[15px] pl-[7px]">
        {['File', 'Edit', 'View', 'Build', 'Run', 'Tools', 'Help'].map((name) => (
          <button type="button" key={name}>{name}</button>
        ))}
      </nav>
      <div className="flex h-[31px] shrink-0 items-center gap-[7px] bg-[#f0f0f0] pl-[9px] pt-0.5">
        <ToolIcon label="New">
          <path d="M7.500 5.500h4l3 3v6h-7z" fill="#fff" stroke="#444" />
          <path d="M4 1v7M1 4.500h7M1.500 2l5 5M6.500 2l-5 5" stroke="#d98a1a" />
        </ToolIcon>
        <ToolIcon label="Open">
          <path d="M8 4h6v10" fill="none" stroke="#dcae66" />
          <path d="M2 9h9l3 6H4z" fill="#dfb676" />
          <path d="M2 7q-1-5 5-4" fill="none" stroke="#0a56a0" strokeWidth="1.500" />
          <path d="M6 .500L9 3 6 5.500z" fill="#0a56a0" />
        </ToolIcon>
        <ToolIcon label="Save">
          <path d="M2 2h12v13H3l-1-1z" fill="#00509c" />
          <path d="M5 2h6v5H5z" fill="#f0f0f0" />
          <path d="M8 2h2v4H8z" fill="#00509c" />
        </ToolIcon>
        <Divider />
        <ToolIcon label="Compile">
          <path d="M4 5.500H1.500v10h13v-10H12" fill="none" stroke="#3c3c3c" />
          <path d="M8 0v8M4.500 5L8 8.500 11.500 5" fill="none" stroke="#3c3c3c" strokeWidth="1.500" />
          <path d="M4 11h8M4 13h8" stroke="#3c3c3c" strokeWidth="1.500" strokeDasharray="2 1" />
        </ToolIcon>
        <ToolIcon label="Stop Compile">
          <path d="M1.500 8v7.500h13v-13H11" fill="none" stroke="#3c3c3c" />
          <path d="M2 1l6 6M8 1L2 7M10 9l3-3" stroke="#3c3c3c" strokeWidth="1.500" />
          <path d="M4 11h8M4 13h8" stroke="#3c3c3c" strokeWidth="1.500" strokeDasharray="2 1" />
        </ToolIcon>
        <Divider />
        <ToolIcon label="Run"><path d="M4 2l8 6-8 6z" fill="#2f8f2f" /></ToolIcon>
        <ToolIcon label="Pause"><path d="M4 3h3v10H4zM9 3h3v10H9z" fill="#3c3c3c" /></ToolIcon>
        <ToolIcon label="Terminate"><path d="M4 4h8v8H4z" fill="#3c3c3c" /></ToolIcon>
        <Divider />
        <ToolIcon label="Target Setup" className="-mx-[3px] h-[21px] w-[23px] border border-[#90c8f6] bg-[#c0dcf3]"><Disc /></ToolIcon>
        <ToolIcon label="Target Uninstall">
          <Disc />
          <path d="M1 1l6 6M7 1L1 7" stroke="#a32020" strokeWidth="1.500" />
        </ToolIcon>
        <Divider />
        <button type="button" aria-label="Help" className="ml-px flex h-3.5 w-3.5 items-center justify-center rounded-full bg-[#169fe0] text-[11px] leading-none font-bold text-white">?</button>
      </div>
      <div className="flex min-h-0 flex-1">
        <div className="w-[21px] bg-[#fbfbf8]" />
      </div>
      <div className="flex h-[15px] shrink-0 items-center bg-[#f0f0f0]">
        <svg viewBox="0 0 16 15" className="h-[15px] w-4" fill="none" stroke="#505050" strokeWidth="2"><path d="M10 4L6.500 7.500 10 11" /></svg>
        <span className="ml-px h-full w-[178px] bg-[#cdcdcd]" />
        <svg viewBox="0 0 16 15" className="ml-auto h-[15px] w-4" fill="none" stroke="#505050" strokeWidth="2"><path d="M6 4l3.500 3.500L6 11" /></svg>
      </div>
      <div className="flex h-5 shrink-0 items-center border-t border-[#d7d7d7] bg-[#f0f0f0] pl-[23px] text-black">
        <span className="w-[22px]">1:</span>
        <span className="w-[99px]">1</span>
        <span>Insert</span>
        <svg viewBox="0 0 9 9" className="ml-auto mr-0.5 h-[9px] w-[9px] self-end" fill="#bbb">
          <path d="M6 0h2v2H6zM6 3h2v2H6zM6 6h2v2H6zM3 3h2v2H3zM3 6h2v2H3zM0 6h2v2H0z" />
        </svg>
      </div>
      <WizardDialog />
    </div>
  )
}

function Workspace() {
  return (
    <div className="flex min-h-0 flex-1 bg-gradient-to-b from-[#c6cfe0] to-[#dde5f2]">
      <main className="relative mt-[5px] ml-[5px] min-w-0 flex-1 overflow-hidden">
        <Wallpaper />
        <div className="absolute left-0 top-[7px] grid auto-rows-[101px] grid-cols-[repeat(7,76px)]">
          {desktopIcons.map((item) => (
            <DesktopShortcut key={item.id} item={item} />
          ))}
        </div>
        <SnippingWindow />
        <InnoWindow />
        <p className="absolute left-[1184px] top-[435px] whitespace-nowrap text-base leading-[26px] text-[#ed1c24]">选择Register.exe文件</p>
        <p className="absolute left-[1184px] top-[565px] whitespace-nowrap text-base leading-[26px] text-[#ed1c24]">
          Add folder添加Register.exe所在的
          <br />
          整个文件夹
        </p>
      </main>
      <div className="ml-px flex w-4 shrink-0 flex-col bg-[#f0f0f0]">
        <svg viewBox="0 0 16 17" className="h-[17px] w-4" fill="none" stroke="#505050" strokeWidth="2"><path d="M4.500 10.500L8 7l3.500 3.500" /></svg>
        <div className="h-[74%] bg-[#cdcdcd]" />
      </div>
    </div>
  )
}

function StatusBar() {
  const cell = 'flex h-full items-center gap-[5px] border-r border-[#d7d7d7]'
  return (
    <footer className="shrink-0 bg-[#f0f0f0] text-xs text-[#1a1a1a]">
      <div className="flex h-4 items-center">
        <svg viewBox="0 0 16 16" className="h-4 w-4" fill="none" stroke="#505050" strokeWidth="2"><path d="M10 4.500L6.500 8l3.500 3.500" /></svg>
        <span className="mt-px h-[15px] ml-px flex-1 bg-[#cdcdcd]" />
        <svg viewBox="0 0 16 16" className="ml-[27px] mr-[18px] h-4 w-4" fill="none" stroke="#505050" strokeWidth="2"><path d="M6 4.500L9.500 8 6 11.500" /></svg>
      </div>
      <div className="flex h-[27px] items-center border-t border-[#d7d7d7] pt-[3px] pb-px">
        <div className={clsx(cell, 'w-[178px] pl-1')}>
          <svg viewBox="0 0 12 12" className="h-3 w-3" fill="none" stroke="#34465f"><path d="M6 0v12M0 6h12M4.500 1.500L6 0l1.500 1.500M4.500 10.500L6 12l1.500-1.500M1.500 4.500L0 6l1.500 1.500M10.500 4.500L12 6l-1.500 1.500" /></svg>
          1205, 639像素
        </div>
        <div className={clsx(cell, 'w-[178px] pl-[5px]')}>
          <svg viewBox="0 0 14 13" className="h-[13px] w-3.5" fill="none" stroke="#34465f"><path d="M2 1v7M.500 2.500L2 1l1.500 1.500M5 11.500h8M11.500 10L13 11.500 11.500 13" /><path d="M5.500 1.500h7v7h-7z" strokeDasharray="2 1" /></svg>
        </div>
        <div className={clsx(cell, 'w-[178px] pl-[5px]')}>
          <svg viewBox="0 0 14 13" className="h-[13px] w-3.5" fill="none" stroke="#34465f"><path d="M2 1v7M.500 2.500L2 1l1.500 1.500M5 11.500h8M11.500 10L13 11.500 11.500 13M5.500 1.500h7v7h-7z" /></svg>
          1920 × 1080像素
        </div>
        <div className={clsx(cell, 'w-[178px]')} />
        <div className={clsx(cell, 'flex-1')} />
        <div className="flex w-[217px] items-center pl-[17px]">
          <label htmlFor="zoom" className="w-[39px]">100%</label>
          <button type="button" aria-label="缩小" className="flex h-4 w-4 items-center justify-center rounded-full border border-[#777] bg-white">
            <span className="h-0.5 w-2 bg-[#444]" />
          </button>
          <input
            id="zoom"
            type="range"
            className="mx-2.5 h-4 w-[85px] appearance-none bg-transparent [&::-webkit-slider-runnable-track]:h-1 [&::-webkit-slider-runnable-track]:border [&::-webkit-slider-runnable-track]:border-[#d6d6d6] [&::-webkit-slider-runnable-track]:bg-[#e7eaea] [&::-webkit-slider-thumb]:-mt-2 [&::-webkit-slider-thumb]:h-[17px] [&::-webkit-slider-thumb]:w-2.5 [&::-webkit-slider-thumb]:appearance-none [&::-webkit-slider-thumb]:bg-[#0078d7] [&::-webkit-slider-thumb]:[clip-path:polygon(0_0,100%_0,100%_75%,50%_100%,0_75%)]"
          />
          <button type="button" aria-label="放大" className="flex h-4 w-4 items-center justify-center rounded-full border border-[#777] bg-white">
            <svg viewBox="0 0 8 8" className="h-2 w-2" stroke="#444" strokeWidth="2"><path d="M4 0v8M0 4h8" /></svg>
          </button>
        </div>
      </div>
    </footer>
  )
}

const taskbarApps: { name: string; active?: boolean; icon: ReactNode }[] = [
  { name: 'Microsoft Edge', icon: <EdgeIcon className="w-5 h-5 text-[#0a7ad9]" /> },
  {
    name: '文件资源管理器',
    icon: (
      <svg viewBox="0 0 22 20" className="w-[22px] h-5">
        <path d="M0 1h8l2 2h12v16H0z" fill="#f3b83a" />
        <path d="M0 5h22v14H0z" fill="#fcdc7c" />
        <path d="M4 19v-7h14v7h-4v-3H8v3z" fill="#3a94dc" />
      </svg>
    ),
  },
  { name: 'Qt Creator', icon: <span className="flex h-4 w-5 items-center justify-center rounded-[2px] bg-[#37c84a] text-[11px] leading-none font-bold text-white">QC</span> },
  {
    name: 'Notepad++',
    icon: (
      <svg viewBox="0 0 24 24" className="w-6 h-6">
        <path d="M2 2h13l4 4v17H2z" fill="#fafafa" stroke="#888" strokeWidth=".8" />
        <path d="M2 14h17v9H2z" fill="#58b51f" />
        <path d="M2 13l17-2v5L2 19z" fill="#a8df5c" />
        <path d="M6 7v6M8.500 8v5M11 10.500h3M15 10.500h3" stroke="#222" strokeWidth="1.300" />
        <path d="M14 17L21 3l2 1-7 14-2 2z" fill="#f0a92e" stroke="#7a5a14" strokeWidth=".5" />
        <path d="M21 3l1-2 2 1-1 2z" fill="#b5402b" />
      </svg>
    ),
  },
  {
    name: '记事本',
    icon: (
      <svg viewBox="0 0 24 24" className="w-6 h-6">
        <path d="M15 4l7 1v16l-7 1z" fill="#b08a4e" />
        <path d="M7 2l14 2-4 18-15-3z" fill="#7fbccb" stroke="#dff3f8" strokeWidth=".8" />
        <path d="M6 7l13-1-3 14-12-2z" fill="#5aa3b8" />
      </svg>
    ),
  },
  { name: '画图', active: true, icon: <PaintIcon className="w-6 h-6" /> },
  { name: 'Inno Setup Compiler', icon: <InnoIcon className="w-6 h-6" /> },
  {
    name: '截图工具',
    icon: (
      <svg viewBox="0 0 24 24" className="w-6 h-6">
        <path d="M2 13v3q3 4 11 2l6-8z" fill="#8e9aa3" />
        <ellipse cx="12" cy="8" rx="11" ry="6" fill="#f4f4f4" stroke="#c8292b" strokeWidth="1.500" transform="rotate(-15 12 8)" />
        <path d="M7 8l10 8M14 4l1 13" stroke="#888" />
        <circle cx="16" cy="20" r="2.500" fill="none" stroke="#1c82d2" strokeWidth="1.800" />
        <circle cx="21" cy="16" r="2.500" fill="none" stroke="#1c82d2" strokeWidth="1.800" />
      </svg>
    ),
  },
]

function Taskbar() {
  return (
    <div className="flex h-10 shrink-0 bg-gradient-to-r from-[#22363d] via-[#20323f] to-[#172542] text-white">
      <button type="button" aria-label="开始" className="flex w-12 items-center justify-center">
        <svg viewBox="0 0 16 16" className="w-4 h-4" fill="#fff"><path d="M0 2.300L6.500 1.400v6.200H0zM7.300 1.300L16 0v7.600H7.300zM0 8.400h6.500v6.200L0 13.700zM7.300 8.400H16V16l-8.700-1.300z" /></svg>
      </button>
      <label className="flex w-[344px] items-center gap-[11px] border border-[#c4c4c4] bg-[#f2f2f2] pl-3">
        <svg viewBox="0 0 16 16" className="w-4 h-4 shrink-0" fill="none" stroke="#222" strokeWidth="1.300"><circle cx="10" cy="6" r="5.300" /><path d="M6.200 9.800L0 16" /></svg>
        <input type="search" placeholder="在这里输入你要搜索的内容" className="min-w-0 flex-1 bg-transparent text-sm placeholder:text-[#333] outline-none" />
      </label>
      <button type="button" aria-label="Cortana" className="flex w-12 items-center justify-center">
        <span className="h-4 w-4 rounded-full border-2 border-white" />
      </button>
      <button type="button" aria-label="任务视图" className="flex w-12 items-center justify-center">
        <svg viewBox="0 0 16 16" className="w-4 h-4" fill="none" stroke="#fff"><path d="M.500 0v2.500h10V0M.500 16v-2.500h10V16M.500 4.500h10v7H.500zM14 0v16" /><path d="M12.500 4.500h3v3h-3z" fill="#fff" /></svg>
      </button>
      <div className="ml-[3px] flex gap-px">
        {taskbarApps.map((app) => (
          <button type="button" key={app.name} aria-label={app.name} className={clsx('flex w-12 flex-col items-center', app.active && 'bg-[#4d5c66]')}>
            <span className="flex flex-1 items-center justify-center">{app.icon}</span>
            <span className={clsx('h-0.5 bg-[#76b9ed]', app.active ? 'w-full' : 'w-10')} />
          </button>
        ))}
      </div>
      <div className="ml-auto flex items-center text-xs leading-[19px]">
        <svg viewBox="0 0 12 8" className="mx-1.5 w-3 h-2" fill="none" stroke="#fff" strokeWidth="1.500"><path d="M1 7l5-5 5 5" /></svg>
        <svg viewBox="0 0 16 14" className="mx-1 w-4 h-3.5" fill="none" stroke="#fff" strokeWidth="1.300"><path d="M5 2h10v8H3V7M0 1h4v3H0zM2 4v3M6 13h8" /></svg>
        <svg viewBox="0 0 16 14" className="mx-1 w-4 h-3.5" fill="none" stroke="#fff" strokeWidth="1.200"><path d="M1 5h2l4-4v12L3 9H1zM9 5q1 2 0 4M11 3q2 4 0 8M13 1q3 6 0 12" /></svg>
        <span className="w-6 text-center text-sm">中</span>
        <time className="w-[70px] text-center">
          22:44
          <br />
          2020/5/7
        </time>
        <button type="button" aria-label="通知" className="relative flex w-11 justify-center">
          <svg viewBox="0 0 16 15" className="w-4 h-[15px]"><path d="M0 0h16v12H8l-3 3v-3H0z" fill="#fff" /><path d="M3 3.500h10M3 6h10M3 8.500h7" stroke="#1b2b46" /></svg>
          <span className="absolute top-2 left-[21px] flex h-4 w-4 items-center justify-center rounded-full bg-[#3a3f48] text-[11px] font-bold">3</span>
        </button>
        <span className="mr-1 ml-[7px] h-full w-px bg-[#667085]" />
      </div>
    </div>
  )
}

export default function App() {
  return (
    <div className={clsx('relative flex h-screen flex-col overflow-hidden', uiFont)}>
      <TitleBar />
      <TabRow />
      <Ribbon />
      <Workspace />
      <StatusBar />
      <Taskbar />
      <div className="absolute right-0 bottom-[49px] flex h-[59px] w-2.5 justify-center rounded-l-sm border border-[#3a3f45] bg-[#5b646d] py-1" aria-hidden>
        <span className="w-1 bg-[repeating-linear-gradient(to_bottom,#22272c_0_1px,#454d55_1px_2px)]" />
        <span className="absolute bottom-1 h-[22px] w-1 bg-[repeating-linear-gradient(to_bottom,#2ab5e8_0_1px,#22272c_1px_2px)]" />
      </div>
      <p className="pointer-events-none absolute right-2 bottom-1.5 font-['Liberation_Sans',sans-serif] text-base leading-6 text-white/60">https://blog.csdn.net/ASCE_Python</p>
    </div>
  )
}
